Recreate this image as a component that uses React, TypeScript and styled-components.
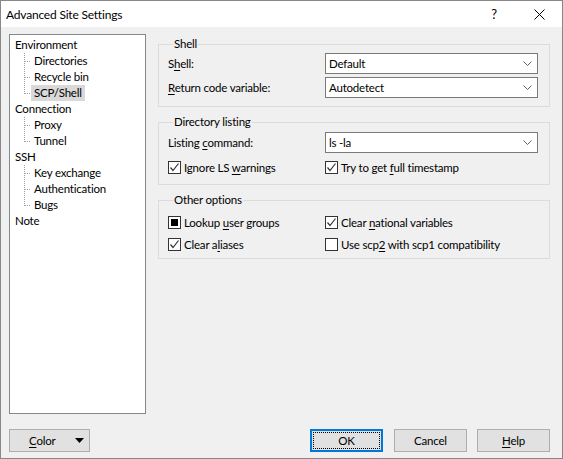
import React from "react";
import styled, { createGlobalStyle } from "styled-components";

const GlobalStyle = createGlobalStyle`
  html, body {
    margin: 0;
    padding: 0;
    background: #f0f0f0;
    overflow: hidden;
  }
  body {
    font-family: "Segoe UI", Lato, "Noto Sans", sans-serif;
    font-size: 11.5px;
    letter-spacing: -0.2px;
    color: #000;
  }
`;

const Window = styled.div`
  width: 563px;
  height: 459px;
  box-sizing: border-box;
  border: 1px solid #888;
  display: flex;
  flex-direction: column;
  background: #f0f0f0;
`;

const TitleBar = styled.div`
  height: 26px;
  background: #fff;
  display: flex;
  align-items: center;
  padding-left: 5px;
  flex-shrink: 0;
`;

const Title = styled.div`
  flex: 1;
  font-size: 12px;
  margin-top: 1px;
`;

const TitleButton = styled.div<{ $w: number }>`
  width: ${(p) => p.$w}px;
  height: 26px;
  display: flex;
  align-items: center;
  justify-content: center;
  font-size: 13px;
`;

const Body = styled.div`
  flex: 1;
  display: flex;
  flex-direction: column;
  padding: 7px 12px 6px 8px;
`;

const Main = styled.div`
  display: flex;
  gap: 12px;
  align-items: flex-start;
`;

const Tree = styled.div`
  width: 137px;
  height: 380px;
  box-sizing: border-box;
  border: 1px solid #828790;
  background: #fff;
  padding-top: 2px;
`;

const TopRow = styled.div`
  height: 16px;
  line-height: 16px;
  padding-left: 5px;
  white-space: nowrap;
`;

const ChildList = styled.div`
  margin-left: 14px;
`;

const ChildRow = styled.div`
  height: 16px;
  display: flex;
  align-items: center;
`;

const Connector = styled.span<{ $last?: boolean }>`
  width: 7px;
  height: 16px;
  flex-shrink: 0;
  background:
    repeating-linear-gradient(to right, #a0a0a0 0 1px, transparent 1px 2px)
      1px 8px / 6px 1px no-repeat,
    repeating-linear-gradient(to bottom, #a0a0a0 0 1px, transparent 1px 2px)
      0 0 / 1px ${(p) => (p.$last ? "9px" : "16px")} no-repeat;
`;

const ChildLabel = styled.span<{ $selected?: boolean }>`
  height: 16px;
  line-height: 16px;
  padding: 0 3px;
  white-space: nowrap;
  background: ${(p) => (p.$selected ? "#d9d9d9" : "transparent")};
`;

const Panel = styled.div`
  flex: 1;
  display: flex;
  flex-direction: column;
  gap: 8px;
  padding-top: 3px;
`;

const Group = styled.fieldset<{ $pt: number; $pb: number }>`
  margin: 0;
  border: 1px solid #dcdcdc;
  padding: ${(p) => p.$pt}px 11px ${(p) => p.$pb}px 9px;
  min-width: 0;
  display: grid;
  grid-template-columns: 157px 1fr;
  row-gap: 3px;
  align-items: center;
`;

const Legend = styled.legend`
  padding: 0 1px;
  margin-left: 5px;
  line-height: 14px;
`;

const FieldLabel = styled.label`
  line-height: 16px;
  white-space: nowrap;
`;

const Combo = styled.div`
  height: 21px;
  box-sizing: border-box;
  border: 1px solid #7a7a7a;
  background: #fff;
  display: flex;
  align-items: center;
  padding: 0 5px 0 3px;
`;

const ComboText = styled.span`
  flex: 1;
  white-space: nowrap;
`;

const CheckRow = styled.div<{ $mt?: number }>`
  display: flex;
  align-items: center;
  height: 16px;
  gap: 3px;
  margin-top: ${(p) => p.$mt ?? 0}px;
  white-space: nowrap;
`;

const Box = styled.span`
  width: 13px;
  height: 13px;
  box-sizing: border-box;
  border: 1px solid #333;
  background: #fff;
  display: flex;
  align-items: center;
  justify-content: center;
  flex-shrink: 0;
`;

const Footer = styled.div`
  margin-top: auto;
  display: flex;
  align-items: center;
`;

const Button = styled.div<{ $w: number; $ml?: number; $default?: boolean }>`
  width: ${(p) => p.$w}px;
  height: 23px;
  margin-left: ${(p) => p.$ml ?? 0}px;
  box-sizing: border-box;
  border: ${(p) => (p.$default ? "2px solid #0078d7" : "1px solid #adadad")};
  background: #e1e1e1;
  display: flex;
  align-items: center;
  justify-content: center;
  padding: ${(p) => (p.$default ? "1px" : "0")};
`;

const FocusRect = styled.div`
  flex: 1;
  align-self: stretch;
  border: 1px dotted #000;
  display: flex;
  align-items: center;
  justify-content: center;
`;

const ColorButton = styled(Button)`
  justify-content: space-between;
  padding: 0 5px 0 19px;
`;

const Spacer = styled.div`
  flex: 1;
`;

const U = styled.span`
  text-decoration: underline;
  text-underline-offset: 2px;
`;

const Chevron = () => (
  <svg width="9" height="5" viewBox="0 0 9 5">
    <path d="M0.5 0.5 L4.5 4.5 L8.5 0.5" fill="none" stroke="#606060" strokeWidth="1" />
  </svg>
);

const Check = () => (
  <svg width="11" height="11" viewBox="0 0 11 11">
    <path d="M1.5 5.5 L4 8.5 L9.5 1.5" fill="none" stroke="#333" strokeWidth="1.2" />
  </svg>
);

type CheckState = "on" | "off" | "mixed";

const CheckBox = ({ state, children, mt }: { state: CheckState; children: React.ReactNode; mt?: number }) => (
  <CheckRow $mt={mt}>
    <Box>
      {state === "on" && <Check />}
      {state === "mixed" && (
        <svg width="7" height="7" viewBox="0 0 7 7">
          <rect width="7" height="7" fill="#000" />
        </svg>
      )}
    </Box>
    <span>{children}</span>
  </CheckRow>
);

const tree = [
  { label: "Environment", children: ["Directories", "Recycle bin", "SCP/Shell"] },
  { label: "Connection", children: ["Proxy", "Tunnel"] },
  { label: "SSH", children: ["Key exchange", "Authentication", "Bugs"] },
  { label: "Note", children: [] as string[] },
];

export default function App() {
  return (
    <>
      <GlobalStyle />
      <Window>
        <TitleBar>
          <Title>Advanced Site Settings</Title>
          <TitleButton $w={44}>?</TitleButton>
          <TitleButton $w={46}>
            <svg width="11" height="11" viewBox="0 0 11 11">
              <path d="M0.5 0.5 L10.5 10.5 M10.5 0.5 L0.5 10.5" stroke="#000" strokeWidth="1" />
            </svg>
          </TitleButton>
        </TitleBar>
        <Body>
          <Main>
            <Tree>
              {tree.map((node) => (
                <div key={node.label}>
                  <TopRow>{node.label}</TopRow>
                  {node.children.length > 0 && (
                    <ChildList>
                      {node.children.map((c, i) => (
                        <ChildRow key={c}>
                          <Connector $last={i === node.children.length - 1} />
                          <ChildLabel $selected={c === "SCP/Shell"}>{c}</ChildLabel>
                        </ChildRow>
                      ))}
                    </ChildList>
                  )}
                </div>
              ))}
            </Tree>
            <Panel>
              <Group $pt={2} $pb={8}>
                <Legend>Shell</Legend>
                <FieldLabel>
                  S<U>h</U>ell:
                </FieldLabel>
                <Combo>
                  <ComboText>Default</ComboText>
                  <Chevron />
                </Combo>
                <FieldLabel>
                  <U>R</U>eturn code variable:
                </FieldLabel>
                <Combo>
                  <ComboText>Autodetect</ComboText>
                  <Chevron />
                </Combo>
              </Group>
              <Group $pt={3} $pb={9}>
                <Legend>Directory listing</Legend>
                <FieldLabel>
                  Listing <U>c</U>ommand:
                </FieldLabel>
                <Combo>
                  <ComboText>ls -la</ComboText>
                  <Chevron />
                </Combo>
                <CheckBox state="on" mt={3}>
                  Ignore LS <U>w</U>arnings
                </CheckBox>
                <CheckBox state="on" mt={3}>
                  Try to get <U>f</U>ull timestamp
                </CheckBox>
              </Group>
              <Group $pt={7} $pb={6}>
                <Legend>Other options</Legend>
                <CheckBox state="mixed">
                  Lookup <U>u</U>ser groups
                </CheckBox>
                <CheckBox state="on">
                  Clear <U>n</U>ational variables
                </CheckBox>
                <CheckBox state="on" mt={3}>
                  Clear a<U>l</U>iases
                </CheckBox>
                <CheckBox state="off" mt={3}>
                  Use scp<U>2</U> with scp1 compatibility
                </CheckBox>
              </Group>
            </Panel>
          </Main>
          <Footer>
            <ColorButton $w={81}>
              <span>
                <U>C</U>olor
              </span>
              <svg width="9" height="5" viewBox="0 0 9 5">
                <path d="M0 0 L9 0 L4.5 5 Z" fill="#000" />
              </svg>
            </ColorButton>
            <Spacer />
            <Button $w={73} $default>
              <FocusRect>OK</FocusRect>
            </Button>
            <Button $w={73} $ml={11}>
              Cancel
            </Button>
            <Button $w={73} $ml={10}>
              <span>
                <U>H</U>elp
              </span>
            </Button>
          </Footer>
        </Body>
      </Window>
    </>
  );
}
